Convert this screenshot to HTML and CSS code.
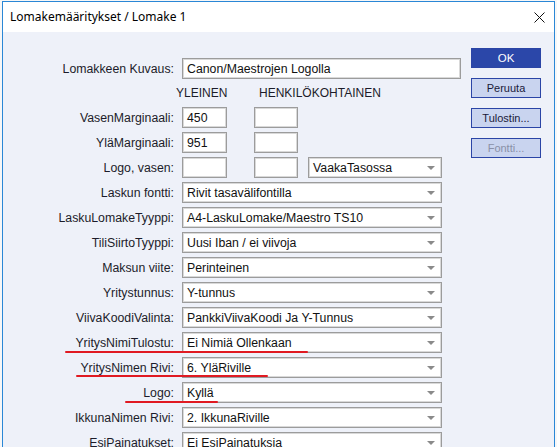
FILE: index.html
```html
<!DOCTYPE html>
<html lang="fi">
<head>
<meta charset="utf-8">
<title>Lomakemääritykset / Lomake 1</title>
<link rel="stylesheet" href="styles.css">
</head>
<body>
<div class="dialog">
  <div class="titlebar">
    <span class="title">Lomakemääritykset / Lomake 1</span>
    <svg class="close" width="11" height="11" viewBox="0 0 11 11"><path d="M0.5 0.5 L10.5 10.5 M10.5 0.5 L0.5 10.5" stroke="#111" stroke-width="1" fill="none"/></svg>
  </div>
  <div class="content">
    <div class="form">
      <div class="row">
        <span class="label">Lomakkeen Kuvaus:</span>
        <span class="field input wide">Canon/Maestrojen Logolla</span>
      </div>
      <div class="row header">
        <span class="h1">YLEINEN</span>
        <span class="h2">HENKILÖKOHTAINEN</span>
      </div>
      <div class="row">
        <span class="label">VasenMarginaali:</span>
        <span class="field input small">450</span>
        <span class="field input small second"></span>
      </div>
      <div class="row">
        <span class="label">YläMarginaali:</span>
        <span class="field input small">951</span>
        <span class="field input small second"></span>
      </div>
      <div class="row">
        <span class="label">Logo, vasen:</span>
        <span class="field input small"></span>
        <span class="field input small second"></span>
        <span class="field select mid">VaakaTasossa<i class="arrow"></i></span>
      </div>
      <div class="row">
        <span class="label">Laskun fontti:</span>
        <span class="field select">Rivit tasavälifontilla<i class="arrow"></i></span>
      </div>
      <div class="row">
        <span class="label">LaskuLomakeTyyppi:</span>
        <span class="field select">A4-LaskuLomake/Maestro TS10<i class="arrow"></i></span>
      </div>
      <div class="row">
        <span class="label">TiliSiirtoTyyppi:</span>
        <span class="field select">Uusi Iban / ei viivoja<i class="arrow"></i></span>
      </div>
      <div class="row">
        <span class="label">Maksun viite:</span>
        <span class="field select">Perinteinen<i class="arrow"></i></span>
      </div>
      <div class="row">
        <span class="label">Yritystunnus:</span>
        <span class="field select">Y-tunnus<i class="arrow"></i></span>
      </div>
      <div class="row">
        <span class="label">ViivaKoodiValinta:</span>
        <span class="field select">PankkiViivaKoodi Ja Y-Tunnus<i class="arrow"></i></span>
      </div>
      <div class="row">
        <span class="label">YritysNimiTulostu:</span>
        <span class="field select">Ei Nimiä Ollenkaan<i class="arrow"></i></span>
      </div>
      <div class="row">
        <span class="label">YritysNimen Rivi:</span>
        <span class="field select">6. YläRiville<i class="arrow"></i></span>
      </div>
      <div class="row">
        <span class="label">Logo:</span>
        <span class="field select">Kyllä<i class="arrow"></i></span>
      </div>
      <div class="row">
        <span class="label">IkkunaNimen Rivi:</span>
        <span class="field select">2. IkkunaRiville<i class="arrow"></i></span>
      </div>
      <div class="row">
        <span class="label">EsiPainatukset:</span>
        <span class="field select">Ei EsiPainatuksia<i class="arrow"></i></span>
      </div>
    </div>
    <div class="buttons">
      <span class="btn primary">OK</span>
      <span class="btn">Peruuta</span>
      <span class="btn">Tulostin...</span>
      <span class="btn disabled">Fontti...</span>
    </div>
  </div>
</div>
<span class="mark m1"></span>
<span class="mark m2"></span>
<span class="mark m3"></span>
</body>
</html>
```

FILE: styles.css
```css
html, body {
  margin: 0;
  padding: 0;
}
body {
  position: relative;
  background: #f7f7f7;
  width: 557px;
  height: 447px;
  overflow: hidden;
  font-family: "Liberation Sans", Arial, sans-serif;
}
.dialog {
  margin: 1px 0 0 2px;
  width: 551px;
  height: 470px;
  border: 1px solid #2a87d6;
  background: #eef1f9;
}
.titlebar {
  height: 30px;
  background: #ffffff;
  display: flex;
  align-items: center;
  justify-content: space-between;
  padding: 0 9px 0 7px;
}
.title {
  font-family: "Noto Sans", "Open Sans", sans-serif;
  font-size: 12px;
  color: #000;
  margin-top: -1px;
}
.close {
  display: block;
}
.content {
  display: flex;
  align-items: flex-start;
}
.form {
  width: 458px;
  padding-top: 26px;
  display: flex;
  flex-direction: column;
  gap: 4px;
}
.row {
  display: flex;
  align-items: center;
  height: 21px;
  font-size: 12.3px;
  color: #1c1c2a;
}
.label {
  width: 171px;
  text-align: right;
  margin-right: 8px;
  white-space: nowrap;
}
.field {
  box-sizing: border-box;
  height: 21px;
  background: #ffffff;
  border: 1px solid #9c9c9c;
  box-shadow: inset 0 0 0 1px #d9d9d9;
  display: flex;
  align-items: center;
  padding-left: 4px;
  white-space: nowrap;
  color: #111;
}
.wide {
  width: 279px;
}
.small {
  width: 45px;
}
.second {
  margin-left: 27px;
  width: 44px;
}
.select {
  width: 260px;
  position: relative;
}
.select.mid {
  width: 134px;
  margin-left: 10px;
}
.arrow {
  position: absolute;
  right: 6px;
  top: 8px;
  width: 0;
  height: 0;
  border-left: 4px solid transparent;
  border-right: 4px solid transparent;
  border-top: 4px solid #8a8a8a;
}
.header {
  height: 20px;
  font-size: 12px;
  padding-left: 173px;
}
.h1 {
  width: 83px;
}
.buttons {
  margin-left: 10px;
  padding-top: 16px;
  display: flex;
  flex-direction: column;
  gap: 10px;
}
.btn {
  box-sizing: border-box;
  width: 70px;
  height: 20px;
  display: flex;
  align-items: center;
  justify-content: center;
  font-size: 11px;
  color: #1a1a3a;
  background: #c9d4ef;
  border: 1px solid #2b45a6;
}
.btn.primary {
  background: #2b47a9;
  color: #ffffff;
  font-size: 11.5px;
}
.btn.disabled {
  color: #8a91a8;
}
.mark {
  position: absolute;
  height: 2.5px;
  background: #e01a22;
  border-radius: 1px;
}
.m1 { left: 65px; top: 350.5px; width: 243px; }
.m2 { left: 76px; top: 374.5px; width: 192px; }
.m3 { left: 125px; top: 400.5px; width: 93px; }
```
